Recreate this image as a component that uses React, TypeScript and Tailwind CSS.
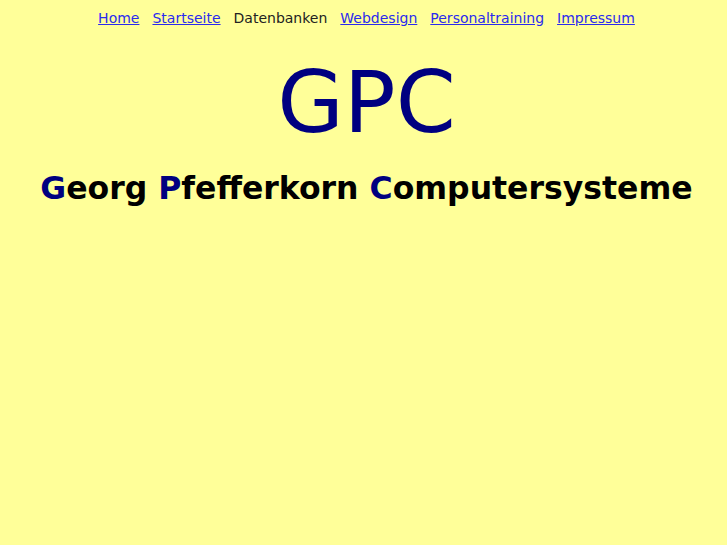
export default function App() {
  const links = [
    { label: "Home", active: false },
    { label: "Startseite", active: false },
    { label: "Datenbanken", active: true },
    { label: "Webdesign", active: false },
    { label: "Personaltraining", active: false },
    { label: "Impressum", active: false },
  ];
  return (
    <div className="min-h-[545px] bg-[#ffff99] pl-[6px] font-['DejaVu_Sans',sans-serif]">
      <nav className="flex justify-center gap-[13px] pt-[8px] text-[14px] leading-[20px]">
        {links.map((l) =>
          l.active ? (
            <span key={l.label} className="text-[#222]">{l.label}</span>
          ) : (
            <a key={l.label} href="#" className="text-[#2a2aee] underline">{l.label}</a>
          )
        )}
      </nav>
      <h1 className="mt-[31px] text-center text-[86px] leading-[86px] text-[#000080]">GPC</h1>
      <h2 className="mt-[23px] text-center text-[31.5px] font-bold leading-[40px] text-black">
        <span className="text-[#000080]">G</span>eorg{" "}
        <span className="text-[#000080]">P</span>fefferkorn{" "}
        <span className="text-[#000080]">C</span>omputersysteme
      </h2>
    </div>
  );
}
